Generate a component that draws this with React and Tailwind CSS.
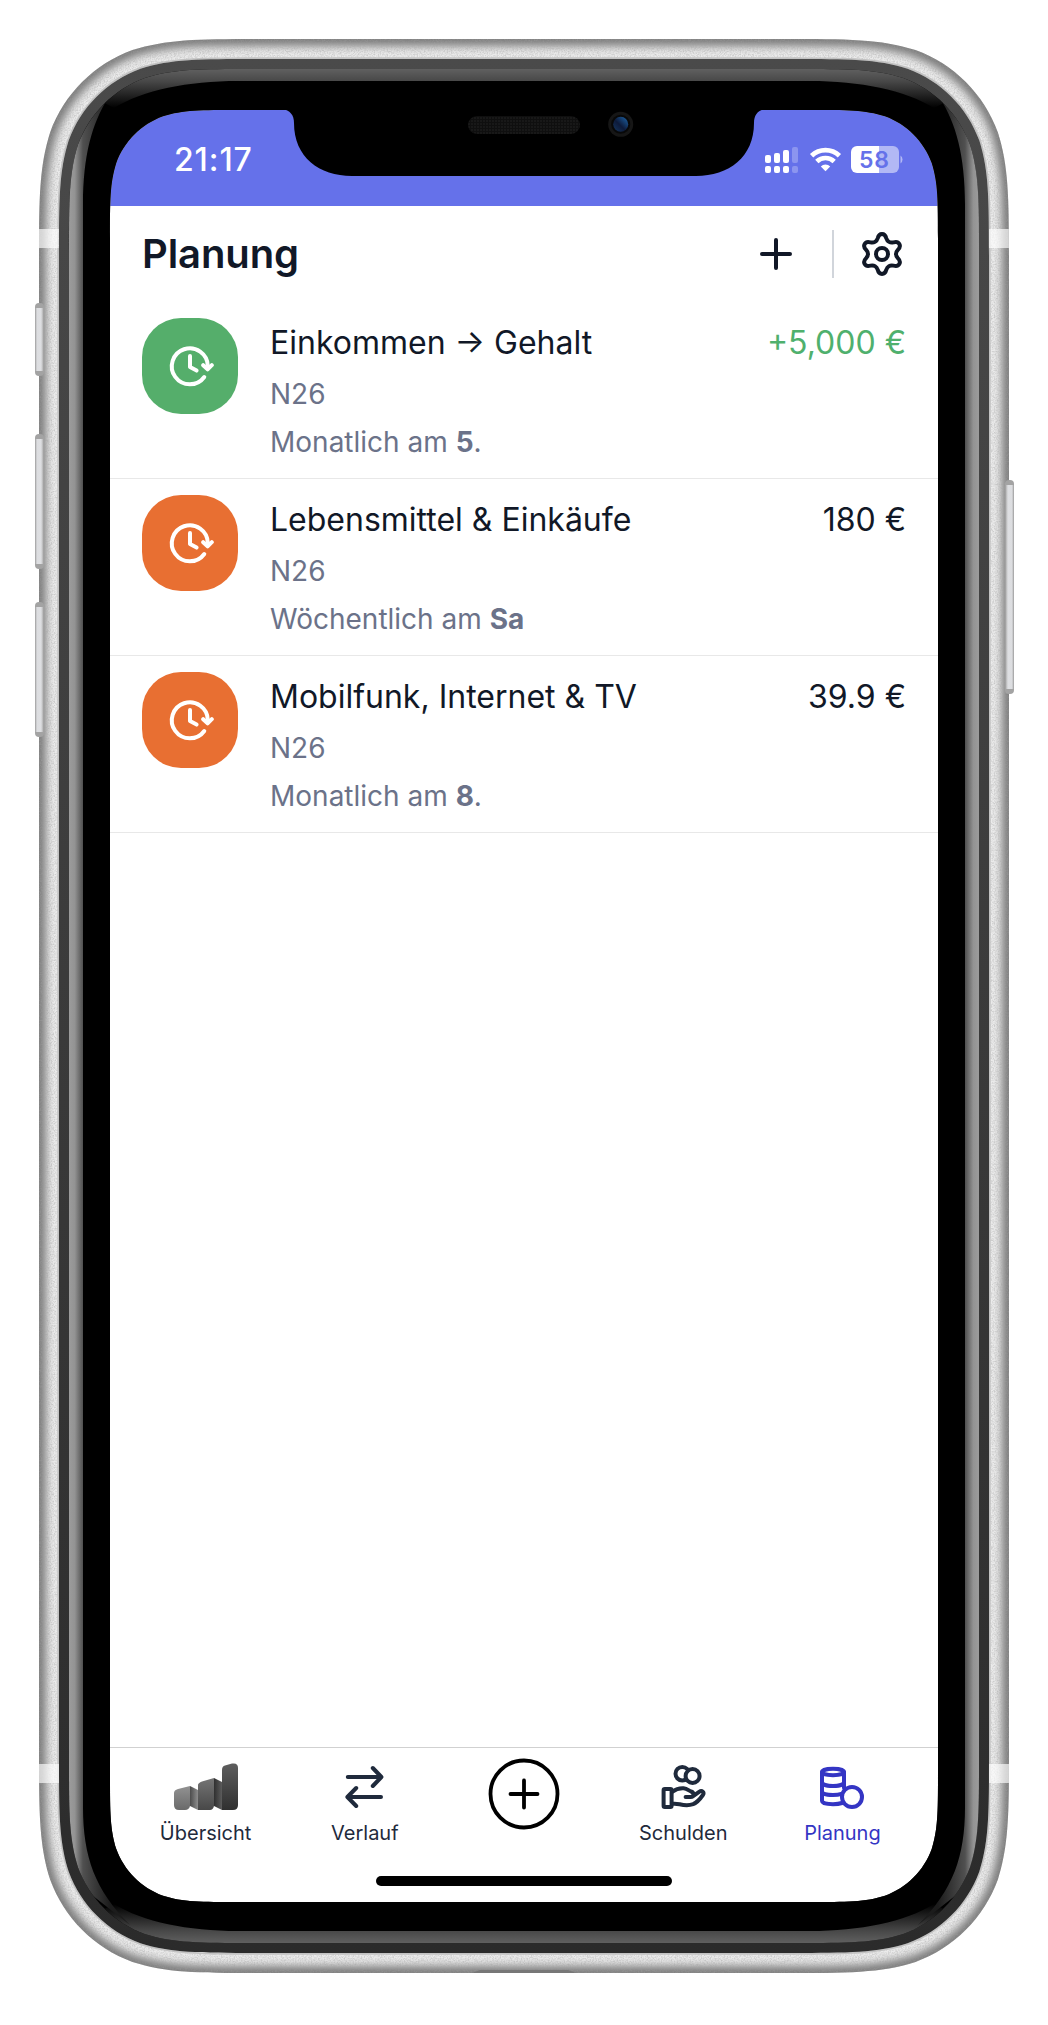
import React from "react";

/* ---------- geometry helpers ---------- */

// Rectangle with continuous ("squircle") corners.
function smoothRect(x0, y0, x1, y1, r) {
  const a = 1.528665 * r, b = 1.088493 * r, c = 0.868407 * r;
  const d = 0.631494 * r, e = 0.074911 * r, f = 0.372824 * r, g = 0.169060 * r;
  return [
    `M${x0 + a} ${y0}H${x1 - a}`,
    `C${x1 - b} ${y0} ${x1 - c} ${y0} ${x1 - d} ${y0 + e}`,
    `C${x1 - f} ${y0 + g} ${x1 - g} ${y0 + f} ${x1 - e} ${y0 + d}`,
    `C${x1} ${y0 + c} ${x1} ${y0 + b} ${x1} ${y0 + a}V${y1 - a}`,
    `C${x1} ${y1 - b} ${x1} ${y1 - c} ${x1 - e} ${y1 - d}`,
    `C${x1 - g} ${y1 - f} ${x1 - f} ${y1 - g} ${x1 - d} ${y1 - e}`,
    `C${x1 - c} ${y1} ${x1 - b} ${y1} ${x1 - a} ${y1}H${x0 + a}`,
    `C${x0 + b} ${y1} ${x0 + c} ${y1} ${x0 + d} ${y1 - e}`,
    `C${x0 + f} ${y1 - g} ${x0 + g} ${y1 - f} ${x0 + e} ${y1 - d}`,
    `C${x0} ${y1 - c} ${x0} ${y1 - b} ${x0} ${y1 - a}V${y0 + a}`,
    `C${x0} ${y0 + b} ${x0} ${y0 + c} ${x0 + e} ${y0 + d}`,
    `C${x0 + g} ${y0 + f} ${x0 + f} ${y0 + g} ${x0 + d} ${y0 + e}`,
    `C${x0 + c} ${y0} ${x0 + b} ${y0} ${x0 + a} ${y0}Z`,
  ].join("");
}

// Six-lobed gear outline around (12,12).
function gearPath() {
  const pts = [
    [-2.9, -6.4], [-2.45, -6.9], [-2.15, -7.9],
    [-1.8, -9.3], [-1.2, -10], [0, -10],
    [1.2, -10], [1.8, -9.3], [2.15, -7.9],
    [2.45, -6.9], [2.9, -6.4], [3.5, -6.06],
  ];
  let d = "";
  for (let k = 0; k < 6; k++) {
    const t = (k * Math.PI) / 3;
    const rot = ([x, y]) =>
      `${(12 + x * Math.cos(t) - y * Math.sin(t)).toFixed(2)} ${(12 + x * Math.sin(t) + y * Math.cos(t)).toFixed(2)}`;
    if (k === 0) d += `M${rot([-3.5, -6.06])}`;
    for (let i = 0; i < 12; i += 3) d += `C${rot(pts[i])} ${rot(pts[i + 1])} ${rot(pts[i + 2])}`;
  }
  return d + "Z";
}

/* ---------- device frame ---------- */

const OUTER = smoothRect(39, 39, 1009, 1973, 148);
const RIM = smoothRect(59, 59, 989, 1953, 129);
const BEZEL = smoothRect(69, 69, 979, 1943, 120);
const SCREEN = smoothRect(110, 110, 938, 1902, 84);

function SideButton({ y, h, right }) {
  return (
    <g transform={right ? "translate(1048 0) scale(-1 1)" : undefined}>
      <rect x={right ? 34 : 35} y={y} width="9" height={h} rx="4" fill="#a3a3a3" />
      <rect x={right ? 34 : 35} y={y + 5} width="8" height={h - 10} fill="url(#button)" />
    </g>
  );
}

function DeviceFrame() {
  return (
    <svg className="pointer-events-none absolute inset-0" width="1048" height="2025" viewBox="0 0 1048 2025" fill="none">
      <defs>
        <linearGradient id="button" x1="0" x2="1" y1="0" y2="0">
          <stop offset="0" stopColor="#9b9b9b" />
          <stop offset="0.25" stopColor="#dcdde0" />
          <stop offset="0.75" stopColor="#dedfe2" />
          <stop offset="1" stopColor="#b4b4b4" />
        </linearGradient>
        <linearGradient id="rim" x1="0" x2="0" y1="0" y2="1">
          <stop offset="0" stopColor="#4a4a4a" />
          <stop offset="1" stopColor="#2b2b2b" />
        </linearGradient>
        <linearGradient id="shineL" gradientUnits="userSpaceOnUse" x1="69" x2="110" y1="0" y2="0">
          <stop offset="0" stopColor="#9c9c9c" />
          <stop offset="0.14" stopColor="#939393" />
          <stop offset="0.34" stopColor="#505050" />
          <stop offset="1" stopColor="#1c1c1c" />
        </linearGradient>
        <linearGradient id="shineT" gradientUnits="userSpaceOnUse" x1="0" x2="0" y1="69" y2="108">
          <stop offset="0" stopColor="#606060" />
          <stop offset="0.31" stopColor="#484848" />
          <stop offset="1" stopColor="#000" />
        </linearGradient>
        <linearGradient id="cam" x1="0" x2="1" y1="1" y2="0">
          <stop offset="0" stopColor="#16375f" />
          <stop offset="0.45" stopColor="#0d1a3a" />
          <stop offset="1" stopColor="#1e67ac" />
        </linearGradient>
        <filter id="soft" x="-5%" y="-5%" width="110%" height="110%">
          <feGaussianBlur stdDeviation="5" />
        </filter>
        <filter id="grain" x="0" y="0" width="100%" height="100%">
          <feTurbulence type="fractalNoise" baseFrequency="0.7" numOctaves="2" seed="4" />
          <feColorMatrix type="matrix" values="0 0 0 0 0.35  0 0 0 0 0.35  0 0 0 0 0.35  1.6 0 0 0 -0.6" />
        </filter>
        <clipPath id="outerClip"><path d={OUTER} /></clipPath>
        <clipPath id="ringClip"><path d={OUTER + RIM} clipRule="evenodd" /></clipPath>
        <clipPath id="bezelClip"><path d={BEZEL} /></clipPath>
        <pattern id="mesh" width="3" height="3" patternUnits="userSpaceOnUse">
          <rect width="3" height="3" fill="#0f0f0f" />
          <rect width="2" height="2" fill="#181818" />
        </pattern>
      </defs>

      <SideButton y={303} h={73} />
      <SideButton y={434} h={135} />
      <SideButton y={602} h={135} />
      <SideButton y={480} h={214} right />

      {/* aluminium band */}
      <path d={OUTER + SCREEN} fill="#ececec" fillRule="evenodd" />
      <g clipPath="url(#ringClip)">
        <path d={OUTER} stroke="#707070" strokeWidth="13" filter="url(#soft)" />
        <rect x="39" y="39" width="970" height="1934" filter="url(#grain)" opacity="0.6" />
        <path d={RIM} stroke="#c2c2c2" strokeWidth="3.4" />
        <rect x="39" y="229" width="20" height="19" fill="#fff" fillOpacity="0.65" />
        <rect x="989" y="229" width="20" height="19" fill="#fff" fillOpacity="0.65" />
        <rect x="39" y="1764" width="20" height="19" fill="#fff" fillOpacity="0.65" />
        <rect x="989" y="1764" width="20" height="19" fill="#fff" fillOpacity="0.65" />
        <path d="M472 1973L480 1970H568L576 1973Z" fill="#777" />
      </g>
      <g clipPath="url(#outerClip)">
        <SideButton y={303} h={73} />
        <SideButton y={434} h={135} />
        <SideButton y={602} h={135} />
        <SideButton y={480} h={214} right />
      </g>

      <path d={RIM + SCREEN} fill="url(#rim)" fillRule="evenodd" />
      <path d={BEZEL + SCREEN} fill="#000" fillRule="evenodd" />

      {/* bezel reflections */}
      <g clipPath="url(#bezelClip)">
        {[undefined, "translate(0 2012) scale(1 -1)"].map((t, i) => (
          <path key={i} transform={t} d="M60 60H988V80L934 108C905 90 860 81 810 81H238C188 81 143 90 114 108L60 80Z" fill="url(#shineT)" />
        ))}
        {[undefined, "translate(1048 0) scale(-1 1)"].map((t, i) => (
          <path key={i} transform={t} d="M60 150L108 98C92 124 83 155 83 205V1807C83 1857 95 1890 130 1925L60 1870Z" fill="url(#shineL)" />
        ))}
      </g>

      {/* notch */}
      <path d="M282 109C290 110 294 115 294 123C294 157 319 176 352 176H696C729 176 754 157 754 123C754 115 758 110 766 109Z" fill="#000" />
      <rect x="468" y="116" width="112" height="18" rx="9" fill="url(#mesh)" />
      <circle cx="620.7" cy="124.3" r="12.5" fill="#161616" />
      <circle cx="620.7" cy="124.3" r="9.5" fill="#080808" />
      <circle cx="620.7" cy="124.3" r="7.5" fill="url(#cam)" />
    </svg>
  );
}

/* ---------- status bar ---------- */

function StatusIcons() {
  return (
    <svg width="140" height="28" viewBox="0 0 140 28" fill="#fff">
      <rect x="0" y="9" width="6" height="8" rx="2" />
      <rect x="9" y="7" width="6" height="10" rx="2" />
      <rect x="18" y="4" width="6" height="13" rx="2" />
      <rect x="0" y="20" width="6" height="7" rx="2" />
      <rect x="9" y="20" width="6" height="7" rx="2" />
      <rect x="18" y="20" width="6" height="7" rx="2" />
      <g opacity="0.25">
        <rect x="27" y="1" width="6" height="16" rx="2" />
        <rect x="27" y="20" width="6" height="7" rx="2" />
      </g>
      <g fill="none" stroke="#fff" strokeWidth="4.7">
        <path d="M46.6 9.7A20 20 0 0 1 74.4 9.7" />
        <path d="M51.8 15.5A12.6 12.6 0 0 1 69.2 15.5" />
      </g>
      <path d="M60.5 25.3L55.8 20.4A6.6 6.6 0 0 1 65.2 20.4Z" />
      <path d="M92 0H114V27H92A6 6 0 0 1 86 21V6A6 6 0 0 1 92 0Z" />
      <path d="M114 0H128A6 6 0 0 1 134 6V21A6 6 0 0 1 128 27H114Z" opacity="0.5" />
      <path d="M135.5 9.5A5 5 0 0 1 135.5 17.5Z" opacity="0.5" />
      <text x="109.5" y="21.7" textAnchor="middle" fontFamily="Inter" fontWeight="600" fontSize="23" letterSpacing="0.8" fill="#6571ea">58</text>
    </svg>
  );
}

/* ---------- icons ---------- */

function GearIcon() {
  return (
    <svg className="size-12" viewBox="0 0 24 24" fill="none" stroke="currentColor" strokeWidth="2" strokeLinejoin="round">
      <path d={gearPath()} />
      <circle cx="12" cy="12" r="3" />
    </svg>
  );
}

function RecurringIcon() {
  return (
    <svg className="size-12" viewBox="-24 -24 48 48" fill="none" stroke="#fff" strokeWidth="4" strokeLinecap="round" strokeLinejoin="round">
      <path d="M17.8 0A18 18 0 1 0 14.3 11" />
      <path d="M13.2 -0.8L17.6 3.4L21.8 -0.8" />
      <path d="M0 -10V1L6.6 4.6" />
    </svg>
  );
}

function BarsIcon() {
  return (
    <svg className="h-12 w-16" viewBox="0 0 64 48">
      <defs>
        <linearGradient id="b1" x2="0" y2="1"><stop stopColor="#929292" /><stop offset="1" stopColor="#6a6a6a" /></linearGradient>
        <linearGradient id="b2" x2="0" y2="1"><stop stopColor="#757575" /><stop offset="1" stopColor="#484848" /></linearGradient>
        <linearGradient id="b3" x2="0" y2="1"><stop stopColor="#5e5e5e" /><stop offset="1" stopColor="#303030" /></linearGradient>
        <linearGradient id="s1"><stop stopColor="#4c4c4c" /><stop offset="1" stopColor="#8d8d8d" /></linearGradient>
        <linearGradient id="s2"><stop stopColor="#303030" /><stop offset="1" stopColor="#5c5c5c" /></linearGradient>
      </defs>
      <path d="M16 23L24 27V47L16 43Z" fill="url(#s1)" />
      <path d="M40 15L48 19V47L40 43Z" fill="url(#s2)" />
      <path d="M0 30Q0 27 4 26L16 23V43Q15 47 11 47H5Q0 47 0 42Z" fill="url(#b1)" />
      <path d="M24 22Q24 20 28 18.5L40 15V43Q39 47 36 47H24Z" fill="url(#b2)" />
      <path d="M48 7Q48 3.5 51 2.6L58 0.6Q64 -0.6 64 5V42Q64 47 59 47H48Z" fill="url(#b3)" />
    </svg>
  );
}

function TransferIcon() {
  return (
    <svg className="size-12" viewBox="0.8 0 48 48" fill="none" stroke="currentColor" strokeWidth="4" strokeLinecap="round" strokeLinejoin="round">
      <path d="M7.6 14H41M32.6 5L41.2 14L32.6 23M40.8 34H7.6M16 25L7.2 34L16 43" />
    </svg>
  );
}

function DebtIcon() {
  return (
    <svg className="size-12" viewBox="-0.6 0 48 48" fill="none" stroke="currentColor" strokeWidth="4" strokeLinecap="round" strokeLinejoin="round">
      <circle cx="22.7" cy="10.7" r="6.8" />
      <circle cx="33" cy="13" r="7" fill="#fff" />
      <rect x="4" y="26" width="8" height="18" rx="1.2" />
      <path d="M12.5 29C16 26.4 20 25 24 25.3C27.5 25.6 29.5 27.8 31.5 28.5C34.8 29.6 34.5 34 31 34H26M33.5 33.2L39.5 28.8C42.5 26.8 45 29.6 43.3 32C40.5 36 37.5 39.5 33.5 41.2C28 43.2 23 42 20 41.2C17 40.6 15 40.4 12.5 40.8" />
    </svg>
  );
}

function CoinsIcon() {
  return (
    <svg className="size-12" viewBox="0 0 48 48" fill="none" stroke="currentColor" strokeWidth="4" strokeLinecap="round">
      <ellipse cx="15" cy="9" rx="11" ry="3.2" />
      <path d="M4 9V38C4 40 9 41.2 15 41.2C19 41.2 22 40.7 24 40M26 9V25" />
      <path d="M4 19C4 21.5 9 23 15 23S26 21.5 26 19M4 28.5C4 31 9 32 15 32C19 32 21.5 31.5 23.5 30.8" />
      <circle cx="34" cy="34" r="10" fill="#fff" />
    </svg>
  );
}

function AddIcon() {
  return (
    <svg className="size-[72px]" viewBox="0 0 72 72" fill="none" stroke="#000" strokeWidth="3.8" strokeLinecap="round">
      <circle cx="36" cy="36" r="33.5" />
      <path d="M22.5 36H49.5M36 22.5V49.5" />
    </svg>
  );
}

/* ---------- content ---------- */

const ENTRIES = [
  { title: "Einkommen → Gehalt", account: "N26", every: "Monatlich am ", day: "5", dot: ".", amount: "+5,000 €", income: true },
  { title: "Lebensmittel & Einkäufe", account: "N26", every: "Wöchentlich am ", day: "Sa", dot: "", amount: "180 €" },
  { title: "Mobilfunk, Internet & TV", account: "N26", every: "Monatlich am ", day: "8", dot: ".", amount: "39.9 €" },
];

function Entry({ title, account, every, day, dot, amount, income }) {
  return (
    <li className="flex h-[177px] items-start border-b border-[#e8e8e8] px-8 pt-4">
      <div className={`flex size-24 shrink-0 items-center justify-center rounded-[39px] ${income ? "bg-[#55ae6b]" : "bg-[#e86f32]"}`}>
        <RecurringIcon />
      </div>
      <div className="ml-8 flex-1">
        <p className="text-[32px] leading-[50px]">{title}</p>
        <p className="text-[28px] leading-[52px] text-[#6b7289]">{account}</p>
        <p className="text-[28px] leading-[44px] text-[#6b7289]">
          {every}<b className="font-bold">{day}</b>{dot}
        </p>
      </div>
      <p className={`text-[32px] leading-[50px] ${income ? "text-[#4fb06d]" : ""}`}>{amount}</p>
    </li>
  );
}

function Tab({ icon, label, active }) {
  return (
    <a className={`flex flex-1 flex-col items-center ${active ? "text-[#3435c4]" : "text-[#1f2a3c]"}`}>
      {icon}
      <span className="mt-2 text-[20px] leading-7">{label}</span>
    </a>
  );
}

export default function App() {
  return (
    <div className="relative h-[2025px] w-[1048px] overflow-hidden bg-white p-[110px] font-['Inter',sans-serif] font-normal text-[#111827]">
      <main className="flex h-[1792px] w-[828px] flex-col bg-white">
        <div className="flex h-24 shrink-0 items-center justify-between bg-[#6571ea] pr-[33px] pl-[64px]">
          <span className="mt-1 text-[32px] leading-none font-medium tracking-[0.9px] text-white">21:17</span>
          <div className="mt-1">
            <StatusIcons />
          </div>
        </div>

        <header className="flex h-24 shrink-0 items-center px-8">
          <h1 className="flex-1 text-[40px] font-semibold tracking-[-0.1px]">Planung</h1>
          <svg className="size-12" viewBox="0 0 48 48" stroke="currentColor" strokeWidth="4" strokeLinecap="round">
            <path d="M10 24H38M24 10V38" />
          </svg>
          <div className="mr-6 ml-8 h-12 w-0.5 bg-[#d1d5db]" />
          <GearIcon />
        </header>

        <ul className="flex-1">
          {ENTRIES.map((e) => (
            <Entry key={e.title} {...e} />
          ))}
        </ul>

        <nav className="flex h-[129px] shrink-0 border-t border-[#d1d1d1] px-4 pt-[15px]">
          <Tab icon={<BarsIcon />} label="Übersicht" />
          <Tab icon={<TransferIcon />} label="Verlauf" />
          <a className="-mt-[5px] flex flex-1 justify-center">
            <AddIcon />
          </a>
          <Tab icon={<DebtIcon />} label="Schulden" />
          <Tab icon={<CoinsIcon />} label="Planung" active />
        </nav>
        <div className="flex h-[26px] shrink-0 justify-center">
          <div className="h-2.5 w-[296px] rounded-full bg-black" />
        </div>
      </main>
      <DeviceFrame />
    </div>
  );
}
